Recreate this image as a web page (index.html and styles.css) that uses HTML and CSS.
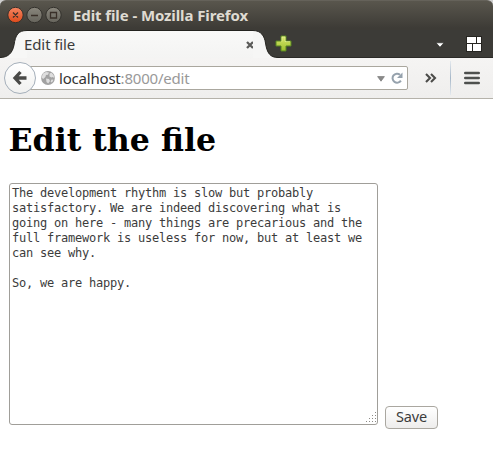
FILE: index.html
```html
<!DOCTYPE html>
<html lang="en">
<head>
<meta charset="utf-8">
<title>Edit file</title>
<link rel="stylesheet" href="styles.css">
</head>
<body>
<div class="chrome">
  <header class="titlebar">
    <svg class="controls" width="58" height="18" viewBox="0 0 58 18">
      <defs>
        <linearGradient id="red" x2="0" y2="1"><stop stop-color="#f58662"/><stop offset="1" stop-color="#df4a1a"/></linearGradient>
        <linearGradient id="grey" x2="0" y2="1"><stop stop-color="#8a877d"/><stop offset="1" stop-color="#66645c"/></linearGradient>
      </defs>
      <g stroke="#33312c">
        <circle cx="10.500" cy="9" r="7.700" fill="url(#red)"/>
        <circle cx="29.500" cy="9" r="7.700" fill="url(#grey)"/>
        <circle cx="48.500" cy="9" r="7.700" fill="url(#grey)"/>
      </g>
      <path d="M8 6.500l5 5m0-5l-5 5M26 9.500h7M45.500 6.500h6v5.500h-6z" fill="none" stroke="#3a3029" stroke-width="1.300"/>
    </svg>
    <span class="window-title">Edit file - Mozilla Firefox</span>
  </header>
  <div class="tabstrip">
    <svg class="curve" width="27" height="28" viewBox="0 0 27 28">
      <path d="M0 27.500C8 27.500 12.500 23 14 15C15.500 5 18 .5 27 .5V28H0z" fill="#f7f7f6"/>
      <path d="M0 27.500C8 27.500 12.500 23 14 15C15.500 5 18 .5 27 .5" fill="none" stroke="#24231f"/>
    </svg>
    <div class="tab">
      <span class="tab-label">Edit file</span>
      <svg class="tab-close" width="8" height="8" viewBox="0 0 8 8"><path d="M1 1l6 6m0-6L1 7" stroke="#5b5b59" stroke-width="2.300"/></svg>
    </div>
    <svg class="curve" width="27" height="28" viewBox="0 0 27 28">
      <path d="M0 .5C8 .5 11.500 6 12.500 13C14 23 17 27.500 25 27.500H27V28H0z" fill="#f6f6f5"/>
      <path d="M0 .5C8 .5 11.500 6 12.500 13C14 23 17 27.500 25 27.500H27" fill="none" stroke="#24231f"/>
    </svg>
    <svg class="new-tab" width="17" height="17" viewBox="0 0 17 17">
      <defs><linearGradient id="green" x2="0" y2="1"><stop stop-color="#dbe96f"/><stop offset="1" stop-color="#9dbf2c"/></linearGradient></defs>
      <path d="M6 1h5v5h5v5h-5v5H6v-5H1V6h5z" fill="url(#green)" stroke="#578522"/>
      <path d="M7 6.500V2h3v4.500h5" fill="none" stroke="#edf5a8" stroke-opacity=".5"/>
    </svg>
    <svg class="tab-list" width="10" height="6" viewBox="0 0 10 6"><path d="M1 .8h8L5 5.200z" fill="#fff" stroke="#242420" stroke-width=".6"/></svg>
    <svg class="groups" width="16" height="16" viewBox="0 0 16 16">
      <path d="M0 0h16v16H0z" fill="#262521"/>
      <path d="M1 1h9v6H1zM11 1h4v6h-4zM1 8h5v7H1zM7 8h8v7H7z" fill="#fff"/>
    </svg>
  </div>
  <nav class="toolbar">
    <div class="back">
      <svg width="16" height="16" viewBox="0 0 16 16"><path d="M8.500 2L3 8l5.500 6M3 8h11.500" fill="none" stroke="#4a4a48" stroke-width="3.300"/></svg>
    </div>
    <div class="urlbar">
      <svg class="globe" width="14" height="14" viewBox="0 0 14 14">
        <circle cx="7" cy="7" r="6.900" fill="#a2a2a2"/>
        <path d="M2 2.500L5 1l3 .5-1 2.200-2 .4-.6 2L2.200 8 .5 6.500zM8.500 2.500l2-.8 2 2.300.8 3-1.600-1-1.200.5-2-1zM5 7.500l3 .6 1 1.800-1.800 2.500-1.700-1.500zM10.500 8.500l2 .3-1.500 2.700-1.400-.8z" fill="#dedede"/>
      </svg>
      <span class="url"><b class="host">localhost</b>:8000/edit</span>
      <svg class="drop" width="8" height="6" viewBox="0 0 8 6"><path d="M.6.600h6.800L4 5.200z" fill="#8b8b8a" stroke="#777" stroke-width=".7"/></svg>
      <svg class="reload" width="12" height="12" viewBox="0 0 12 12">
        <path d="M9 2.800A4.500 4.500 0 1 0 9.900 8.600" fill="none" stroke="#96a2ad" stroke-width="2"/>
        <path d="M11.500.5V6H6z" fill="#96a2ad"/>
      </svg>
    </div>
    <svg class="more" width="12" height="10" viewBox="0 0 12 10"><path d="M1 1l4 4-4 4M6 1l4 4-4 4" fill="none" stroke="#4b4b49" stroke-width="2.100"/></svg>
    <span class="separator"></span>
    <svg class="menu" width="16" height="14" viewBox="0 0 16 14"><path d="M1.300 2h13.400M1.300 7h13.400M1.300 12h13.400" stroke="#4e504e" stroke-width="2.600" stroke-linecap="round"/></svg>
  </nav>
</div>
<main class="page">
  <h1 class="heading">Edit the file</h1>
  <form class="form">
    <div class="editor">
      <textarea class="text" spellcheck="false">The development rhythm is slow but probably
satisfactory. We are indeed discovering what is
going on here - many things are precarious and the
full framework is useless for now, but at least we
can see why.

So, we are happy.</textarea>
      <svg class="grip" width="11" height="11" viewBox="0 0 11 11">
        <path d="M9 .5h1M6 3.500h1m2 0h1M3 6.500h1m2 0h1m2 0h1M0 9.500h1m2 0h1m2 0h1m2 0h1" stroke="#8c8a86"/>
      </svg>
    </div>
    <button class="save" type="button">Save</button>
  </form>
</main>
</body>
</html>
```
FILE: styles.css
```css
* { box-sizing: border-box; }
body {
  margin: 0;
  height: 468px;
  overflow: hidden;
  background: #fff;
  font-family: "Noto Sans", sans-serif;
}
svg { display: block; flex: none; }
.chrome { background: #cfcfcf; }
.titlebar {
  display: flex;
  align-items: center;
  height: 30px;
  padding: 0 0 1px 5px;
  border-top: 1px solid #65625a;
  border-radius: 6px 6px 0 0;
  background: linear-gradient(#59564d, #3d3b36 27px);
}
.window-title {
  margin: -1px 0 0 10px;
  color: #dfdbd2;
  font-size: 15px;
  font-weight: 700;
  letter-spacing: -0.1px;
  white-space: nowrap;
}
.tabstrip {
  display: flex;
  align-items: center;
  height: 28px;
  background: #3c3b37;
  border-bottom: 1px solid #2b2a27;
}
.curve { align-self: flex-start; }
.tab {
  display: flex;
  align-items: center;
  align-self: flex-start;
  width: 226px;
  height: 28px;
  border-top: 1px solid #24231f;
  background: linear-gradient(#f9f9f8, #f4f4f3);
}
.tab-label {
  margin: -2px 0 0 -3px;
  color: #3c3c3c;
  font-size: 15px;
  letter-spacing: -0.1px;
}
.tab-close { margin: 0 -1px 0 auto; }
.new-tab { margin-left: -5px; }
.tab-list { margin-left: 143px; margin-top: 3px; }
.groups { margin-left: 21px; }
.toolbar {
  display: flex;
  align-items: center;
  height: 41px;
  padding: 0 0 1px 4px;
  border-bottom: 1px solid #b5b2aa;
  background: linear-gradient(#f5f4f3, #efeeed);
}
.back {
  position: relative;
  display: flex;
  align-items: center;
  justify-content: center;
  width: 32px;
  height: 32px;
  border: 1px solid #a5afba;
  border-radius: 50%;
  background: linear-gradient(#fff, #f0f0ef);
}
.urlbar {
  display: flex;
  align-items: center;
  width: 388px;
  height: 24px;
  margin-left: -16px;
  padding-left: 20px;
  border: 1px solid #aaa79e;
  border-radius: 2px;
  background: #fff;
}
.url {
  margin-left: 4px;
  color: #999;
  font-size: 15px;
  letter-spacing: -0.2px;
  white-space: nowrap;
}
.host { color: #333; font-weight: 400; }
.drop { margin-left: auto; margin-top: 2px; }
.reload { margin: 0 4px 0 6px; }
.more { margin-left: 17px; }
.separator {
  width: 1px;
  height: 34px;
  margin-left: 13px;
  background: linear-gradient(#e4e9ee, #a6b7c8, #e4e9ee);
}
.menu { margin-left: 13px; }
.page { padding: 22px 9px 0; }
.heading {
  margin: 0 0 0 -0.5px;
  font: 700 31.600px/38px "DejaVu Serif", serif;
  color: #000;
}
.form {
  display: flex;
  align-items: flex-end;
  margin-top: 24px;
}
.editor { position: relative; width: 369px; height: 242px; }
.text {
  display: block;
  width: 369px;
  height: 242px;
  padding: 2px;
  border: 1px solid #a09e99;
  border-radius: 3px;
  outline: 0;
  resize: none;
  overflow: hidden;
  background: #fff;
  color: #3c3c3c;
  font: 12px/15px "DejaVu Sans Mono", monospace;
  letter-spacing: -0.225px;
  white-space: pre;
}
.grip { position: absolute; right: 1px; bottom: 2px; }
.save {
  width: 53px;
  height: 23px;
  margin: 0 0 -4px 7px;
  padding: 0 0 2px;
  border: 1px solid #aaa7a0;
  border-radius: 4px;
  background: linear-gradient(#fff, #eeedec);
  color: #3c3c3c;
  font: 14.500px/19px "Noto Sans", sans-serif;
  letter-spacing: -0.2px;
}
```
